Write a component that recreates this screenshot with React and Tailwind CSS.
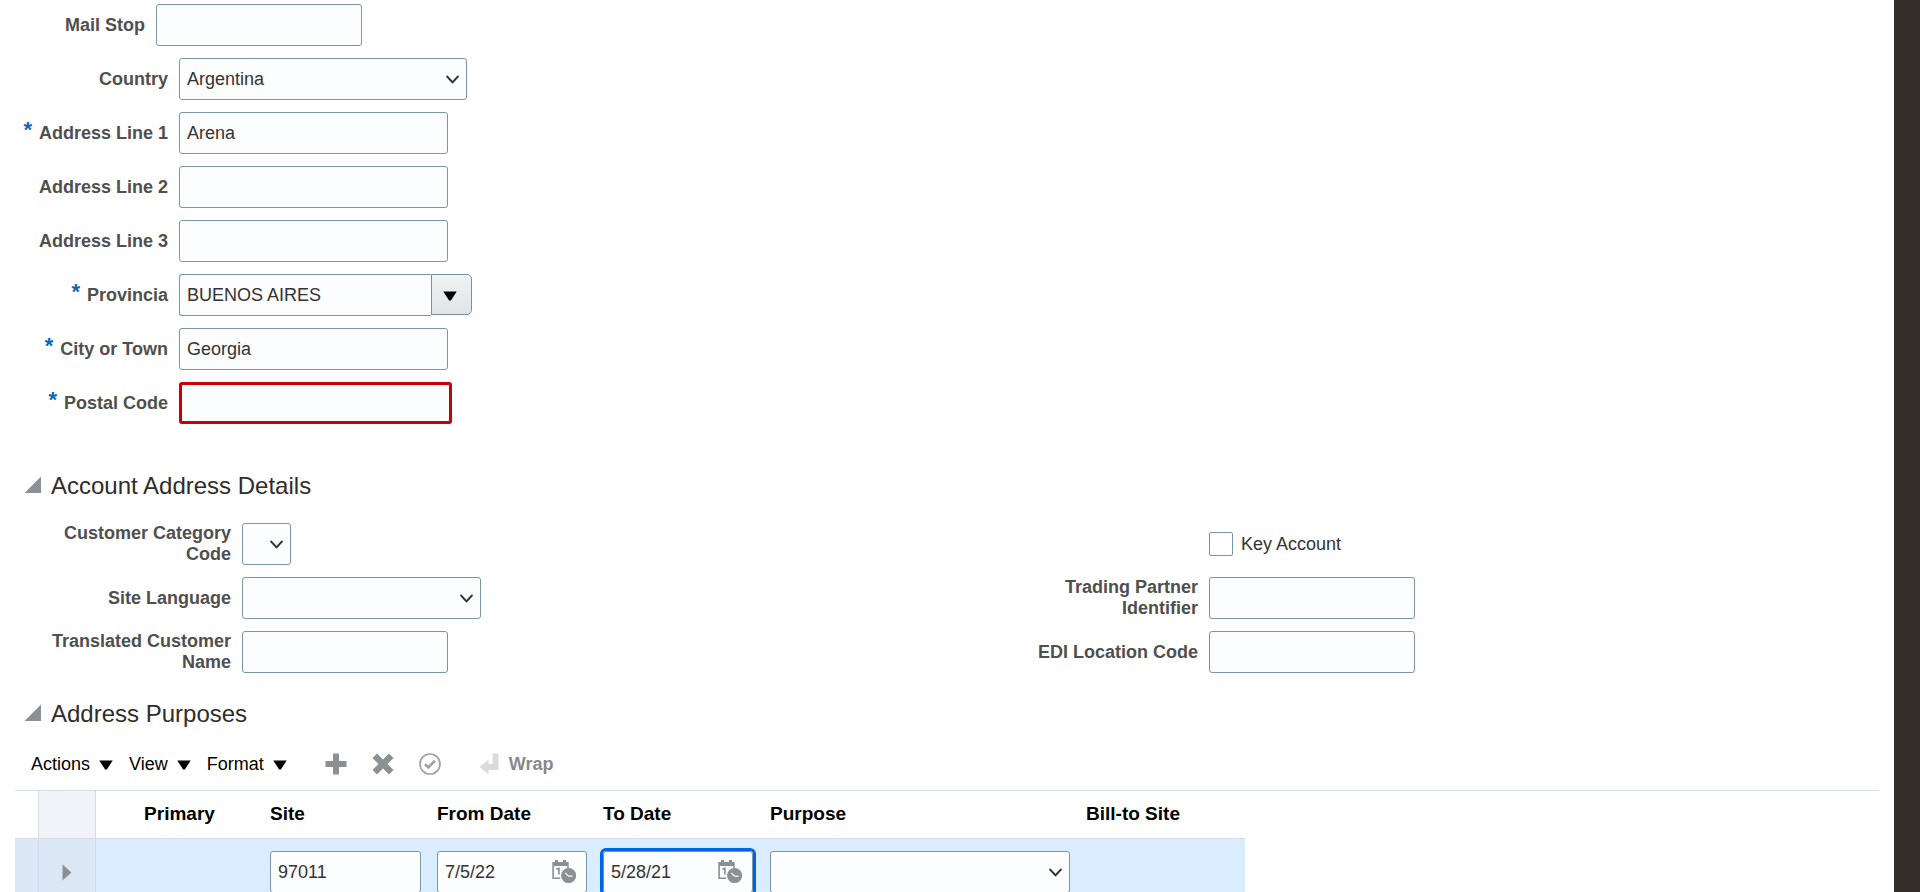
import React from 'react';

const FIELD =
  'h-[42px] rounded-[3px] border border-[#7b96a8] bg-[#fcfdfe] px-[7px] text-[18px] text-[#333333] outline-none';
const LABEL = 'shrink-0 pr-[11px] text-right text-[18px] font-bold leading-[21px] text-[#4f4f4f]';

function FieldRow({ id, label, required, labelWidth = 'w-[179px]', children }) {
  return (
    <div className="flex min-h-[42px] items-center">
      <label htmlFor={id} className={`${LABEL} ${labelWidth}`}>
        {required && (
          <span className="mr-[7px] align-[2px] text-[22px] leading-[10px] text-[#0b67b5]">*</span>
        )}
        {label}
      </label>
      {children}
    </div>
  );
}

function SelectField({ id, width, value, label }) {
  return (
    <div className={`relative ${width}`}>
      <select
        id={id}
        aria-label={label}
        defaultValue={value}
        className={`${FIELD} block w-full appearance-none`}
      >
        <option value={value}>{value}</option>
      </select>
      <svg
        viewBox="0 0 14 10"
        className="pointer-events-none absolute right-[7px] top-[17px] h-[10px] w-[14px]"
        fill="none"
        stroke="#333333"
        strokeWidth="2.1"
        strokeLinecap="round"
        strokeLinejoin="round"
      >
        <path d="M1.200 1.600l5.300 5.800 5.300-5.800" />
      </svg>
    </div>
  );
}

function TriangleDown() {
  return (
    <svg viewBox="0 0 14 10" className="h-[10px] w-[14px]">
      <path d="M0.300 0.500h13.400L7.900 9.500H6.100z" fill="#000000" />
    </svg>
  );
}

function SectionHeading({ children }) {
  return (
    <div className="flex h-[28px] pl-[24px]">
      <button type="button" aria-label="Collapse section" className="mt-[4px] h-[18px] w-[18px]">
        <svg viewBox="0 0 18 18" className="h-[18px] w-[18px]">
          <path d="M17 0.500V17H0.500z" fill="#8b9095" />
        </svg>
      </button>
      <h2 className="pl-[9px] text-[24px] leading-[28px] text-[#302c29]">{children}</h2>
    </div>
  );
}

function CalendarIcon() {
  return (
    <svg viewBox="0 0 24 24" className="h-[24px] w-[24px]">
      <path
        d="M0.300 2H3V0h3v2h5V0h3v2h2.700v6.200h-1.500V6H1.900v11.500h6.300V19H0.300z"
        fill="#8b9095"
      />
      <path d="M4.200 8.600 6.400 7.600h1.300v7H6V9.800H4.200z" fill="#8b9095" />
      <circle cx="16.600" cy="15.600" r="7.500" fill="#8b9095" />
      <path d="M13.200 12.800l3.400 3.400h4" fill="none" stroke="#fcfdfe" strokeWidth="1.200" />
    </svg>
  );
}

function DateField({ label, value, focused }) {
  return (
    <div className={`relative w-[150px] rounded-[3px] ${focused ? 'ring-[3px] ring-[#0363e6]' : ''}`}>
      <input
        type="text"
        aria-label={label}
        defaultValue={value}
        className={`${FIELD} block w-full pr-[38px]`}
      />
      <button
        type="button"
        aria-label={`Select ${label}`}
        className="absolute right-[11px] top-[9px] h-[24px] w-[24px]"
      >
        <CalendarIcon />
      </button>
    </div>
  );
}

function MenuButton({ children }) {
  return (
    <button type="button" className="flex items-center gap-[9px] text-[18px] text-black">
      {children}
      <span className="pt-[2px]">
        <TriangleDown />
      </span>
    </button>
  );
}

function Toolbar() {
  return (
    <div className="flex h-[62px] items-center pl-[31px] pt-[10px]">
      <div className="flex items-center gap-[16px]">
        <MenuButton>Actions</MenuButton>
        <MenuButton>View</MenuButton>
        <MenuButton>Format</MenuButton>
      </div>
      <div className="flex items-center gap-[25px] pl-[38px]">
        <button type="button" aria-label="Add row">
          <svg viewBox="0 0 22 22" className="h-[22px] w-[22px]">
            <path d="M8 0.500h6V8h7.500v6H14v7.500H8V14H0.500V8H8z" fill="#8b9095" />
          </svg>
        </button>
        <button type="button" aria-label="Delete row">
          <svg viewBox="0 0 22 22" className="h-[22px] w-[22px]">
            <path
              d="M5 0.500l6 6 6-6L21.500 5l-6 6 6 6-4.500 4.500-6-6-6 6L0.500 17l6-6-6-6z"
              fill="#8b9095"
            />
          </svg>
        </button>
        <button type="button" aria-label="Set as primary">
          <svg viewBox="0 0 22 22" className="h-[22px] w-[22px]" fill="none" stroke="#9da2a7">
            <circle cx="11" cy="11" r="10" strokeWidth="1.700" />
            <path d="M6 11.200l3.400 3.200L16 7.600" strokeWidth="2.600" />
          </svg>
        </button>
      </div>
      <button
        type="button"
        disabled
        className="ml-[38px] flex items-center gap-[10px] text-[18px] font-bold text-[#888888]"
      >
        <svg viewBox="0 0 20 22" className="h-[22px] w-[20px]">
          <path d="M13.500 0.500h6v16.500H9.500v4.500L0.500 14l9-7.500V11h4z" fill="#d9dbdd" />
        </svg>
        Wrap
      </button>
    </div>
  );
}

const HEADER = 'border-b border-[#d6dfe6] pl-[7px] text-left';

function PurposesTable() {
  return (
    <div className="mx-[15px] border-t border-[#d3dde6]">
      <table className="w-[1230px] table-fixed border-separate border-spacing-0 text-[19px]">
        <colgroup>
          <col className="w-[24px]" />
          <col className="w-[57px]" />
          <col className="w-[167px]" />
          <col className="w-[167px]" />
          <col className="w-[166px]" />
          <col className="w-[167px]" />
          <col className="w-[316px]" />
          <col className="w-[166px]" />
        </colgroup>
        <thead>
          <tr className="h-[48px] text-black">
            <td className="border-b border-r border-[#d3dde6]" />
            <td className="border-b border-r border-[#d3dde6] bg-[#f2f3f8]" />
            <th className="border-b border-[#d6dfe6]">Primary</th>
            <th className={HEADER}>Site</th>
            <th className={HEADER}>From Date</th>
            <th className={HEADER}>To Date</th>
            <th className={HEADER}>Purpose</th>
            <th className={HEADER}>Bill-to Site</th>
          </tr>
        </thead>
        <tbody>
          <tr className="h-[66px] bg-[#d9edff]">
            <td className="border-r border-[#cddcec] bg-[#dbe7f5]" />
            <td className="border-r border-[#cddcec] bg-[#dbe7f5] text-center">
              <button type="button" aria-label="Expand row" className="align-middle">
                <svg viewBox="0 0 10 18" className="h-[18px] w-[10px]">
                  <path d="M0.500 0.500v16L9.500 8.500z" fill="#8b9095" />
                </svg>
              </button>
            </td>
            <td />
            <td className="pl-[7px]">
              <input
                type="text"
                aria-label="Site"
                defaultValue="97011"
                className={`${FIELD} block w-[151px]`}
              />
            </td>
            <td className="pl-[7px]">
              <DateField label="From Date" value="7/5/22" />
            </td>
            <td className="pl-[7px]">
              <DateField label="To Date" value="5/28/21" focused />
            </td>
            <td className="pl-[7px]">
              <SelectField label="Purpose" width="w-[300px]" value="" />
            </td>
            <td />
          </tr>
        </tbody>
      </table>
    </div>
  );
}

export default function App() {
  return (
    <div className="flex h-screen overflow-hidden bg-white font-['Liberation_Sans',Arial,sans-serif]">
      <main className="min-w-0 flex-1 pt-[4px]">
        <form className="flex flex-col gap-3">
          <FieldRow id="mail-stop" label="Mail Stop" labelWidth="w-[156px]">
            <input id="mail-stop" type="text" className={`${FIELD} w-[206px]`} />
          </FieldRow>
          <FieldRow id="country" label="Country">
            <SelectField id="country" width="w-[288px]" value="Argentina" />
          </FieldRow>
          <FieldRow id="address-1" label="Address Line 1" required>
            <input id="address-1" type="text" defaultValue="Arena" className={`${FIELD} w-[269px]`} />
          </FieldRow>
          <FieldRow id="address-2" label="Address Line 2">
            <input id="address-2" type="text" className={`${FIELD} w-[269px]`} />
          </FieldRow>
          <FieldRow id="address-3" label="Address Line 3">
            <input id="address-3" type="text" className={`${FIELD} w-[269px]`} />
          </FieldRow>
          <FieldRow id="provincia" label="Provincia" required>
            <div className="flex">
              <input
                id="provincia"
                type="text"
                defaultValue="BUENOS AIRES"
                className={`${FIELD} w-[252px] rounded-r-none border-r-0`}
              />
              <button
                type="button"
                aria-label="Show Provincia values"
                className="flex h-[41px] w-[41px] items-center justify-center rounded-r-[5px] border border-[#7590a8] bg-linear-to-b from-[#f0f3f5] to-[#dfe4e8] pr-[3px] pt-[3px]"
              >
                <TriangleDown />
              </button>
            </div>
          </FieldRow>
          <FieldRow id="city" label="City or Town" required>
            <input id="city" type="text" defaultValue="Georgia" className={`${FIELD} w-[269px]`} />
          </FieldRow>
          <FieldRow id="postal" label="Postal Code" required>
            <input
              id="postal"
              type="text"
              className="h-[42px] w-[273px] rounded-[3px] border-[3px] border-[#cc0000] bg-[#fcfdfe] px-[7px] text-[18px] text-[#333333] outline-none"
            />
          </FieldRow>
        </form>

        <section className="pt-[48px]">
          <SectionHeading>Account Address Details</SectionHeading>
          <div className="grid grid-cols-2 gap-x-10 pt-[23px]">
            <div className="flex flex-col gap-3">
              <FieldRow id="category" label="Customer Category Code" labelWidth="w-[242px] pl-[45px]">
                <SelectField id="category" width="w-[49px]" value="" />
              </FieldRow>
              <FieldRow id="language" label="Site Language" labelWidth="w-[242px] pl-[45px]">
                <SelectField id="language" width="w-[239px]" value="" />
              </FieldRow>
              <FieldRow id="translated" label="Translated Customer Name" labelWidth="w-[242px] pl-[45px]">
                <input id="translated" type="text" className={`${FIELD} w-[206px]`} />
              </FieldRow>
            </div>
            <div className="flex flex-col gap-3">
              <div className="flex h-[42px] items-center gap-[8px] pl-[242px]">
                <input
                  id="key-account"
                  type="checkbox"
                  className="h-[24px] w-[24px] appearance-none rounded-[2px] border border-[#7b96a8] bg-white"
                />
                <label htmlFor="key-account" className="text-[18px] text-[#333333]">
                  Key Account
                </label>
              </div>
              <FieldRow id="trading" label="Trading Partner Identifier" labelWidth="w-[242px] pl-[45px]">
                <input id="trading" type="text" className={`${FIELD} w-[206px]`} />
              </FieldRow>
              <FieldRow id="edi" label="EDI Location Code" labelWidth="w-[242px] pl-[45px]">
                <input id="edi" type="text" className={`${FIELD} w-[206px]`} />
              </FieldRow>
            </div>
          </div>
        </section>

        <section className="pt-[27px]">
          <SectionHeading>Address Purposes</SectionHeading>
          <Toolbar />
          <PurposesTable />
        </section>
      </main>
      <aside className="w-[26px] shrink-0 bg-[#332e2a]" />
    </div>
  );
}
